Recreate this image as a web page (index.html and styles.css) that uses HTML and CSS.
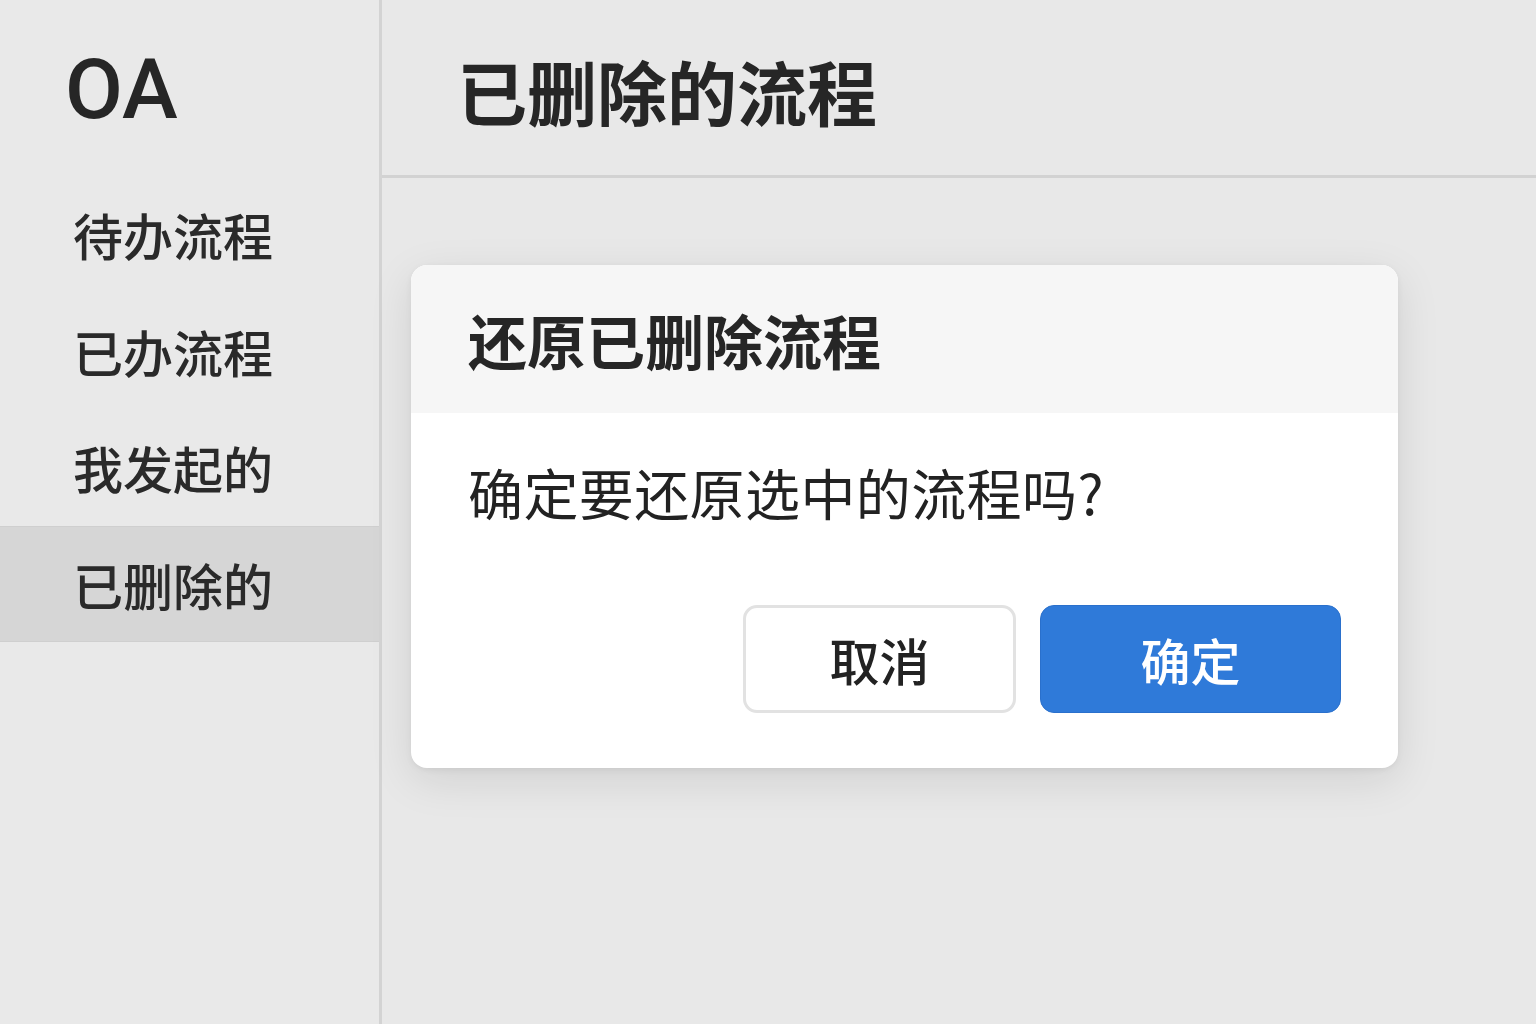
FILE: index.html
```html
<!DOCTYPE html>
<html lang="zh-CN">
<head>
<meta charset="utf-8">
<title>OA - 已删除的流程</title>
<link rel="stylesheet" href="styles.css">
</head>
<body>
<div class="app">
  <aside class="sidebar">
    <div class="logo">OA</div>
    <nav class="menu">
      <div class="menu-item">待办流程</div>
      <div class="menu-item">已办流程</div>
      <div class="menu-item">我发起的</div>
      <div class="menu-item active">已删除的</div>
    </nav>
  </aside>
  <main class="main">
    <header class="page-header">
      <h1 class="page-title">已删除的流程</h1>
    </header>
    <section class="content">
      <div class="dialog">
        <div class="dialog-header">
          <h2 class="dialog-title">还原已删除流程</h2>
        </div>
        <div class="dialog-body">
          <p class="dialog-text">确定要还原选中的流程吗?</p>
          <div class="dialog-actions">
            <button class="btn btn-cancel">取消</button>
            <button class="btn btn-primary">确定</button>
          </div>
        </div>
      </div>
    </section>
  </main>
</div>
</body>
</html>
```

FILE: styles.css
```css
* { box-sizing: border-box; }
html, body {
  margin: 0;
  padding: 0;
  width: 1536px;
  height: 1024px;
  overflow: hidden;
  background: #e8e8e8;
  font-family: "Noto Sans CJK SC", "Noto Sans", sans-serif;
  color: #222;
}
.app {
  display: flex;
  height: 1024px;
}
.sidebar {
  width: 382px;
  flex: none;
  background: #e9e9e9;
  border-right: 3px solid #d3d3d3;
}
.logo {
  height: 176px;
  padding-left: 65px;
  padding-top: 41px;
  font-family: Roboto, "Liberation Sans", Arial, sans-serif;
  font-size: 84px;
  line-height: 98px;
  font-weight: 500;
  color: #262626;
}
.menu {
  display: flex;
  flex-direction: column;
}
.menu-item {
  height: 116.5px;
  display: flex;
  align-items: center;
  padding-left: 73px;
  font-size: 50px;
  font-weight: 500;
  color: #2a2a2a;
}
.menu-item.active {
  background: #d6d6d6;
  border-top: 1px solid #cfcfcf;
  border-bottom: 1px solid #cfcfcf;
}
.main {
  flex: 1;
  display: flex;
  flex-direction: column;
}
.page-header {
  height: 178px;
  border-bottom: 3px solid #d2d2d2;
  display: flex;
  align-items: center;
  padding-left: 75px;
  background: #e8e8e8;
}
.page-title {
  margin: 0;
  font-size: 70px;
  font-weight: 700;
  color: #262626;
  line-height: 1;
  padding-top: 6px;
}
.content {
  flex: 1;
  padding: 87px 0 0 29px;
}
.dialog {
  width: 987px;
  height: 503px;
  background: #ffffff;
  border-radius: 16px;
  overflow: hidden;
  box-shadow: 0 12px 44px rgba(0, 0, 0, 0.10), 0 2px 6px rgba(0, 0, 0, 0.06);
  display: flex;
  flex-direction: column;
}
.dialog-header {
  height: 148px;
  background: #f6f6f6;
  display: flex;
  align-items: center;
  padding-left: 57px;
}
.dialog-title {
  margin: 0;
  font-size: 59px;
  font-weight: 700;
  color: #262626;
  line-height: 1;
}
.dialog-body {
  flex: 1;
  display: flex;
  flex-direction: column;
  padding: 40px 57px 55px 57px;
}
.dialog-text {
  margin: 0;
  font-size: 55px;
  line-height: 76px;
  font-weight: 400;
  color: #222;
  letter-spacing: 0.4px;
}
.dialog-actions {
  margin-top: auto;
  display: flex;
  justify-content: flex-end;
  gap: 24px;
}
.btn {
  height: 108px;
  border-radius: 14px;
  font-family: "Noto Sans CJK SC", "Noto Sans", sans-serif;
  font-size: 50px;
  font-weight: 500;
  display: flex;
  align-items: center;
  justify-content: center;
  padding: 0;
  cursor: pointer;
}
.btn-cancel {
  width: 273px;
  background: #ffffff;
  border: 3px solid #e2e2e2;
  color: #222;
}
.btn-primary {
  width: 301px;
  background: #2f7ad9;
  border: 1px solid #2a70cc;
  color: #ffffff;
}
```
